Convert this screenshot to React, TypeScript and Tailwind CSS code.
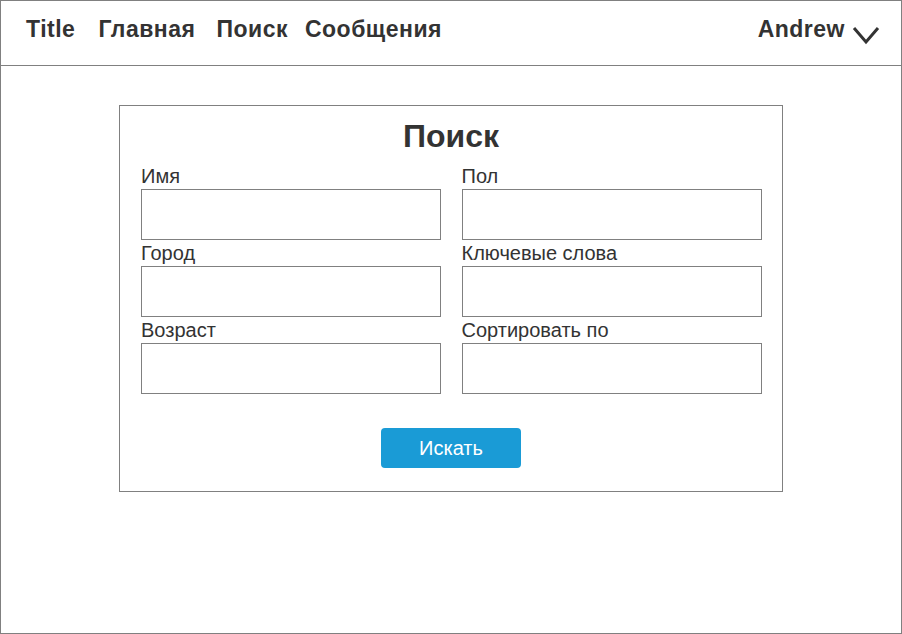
export default function App() {
  const fields = [
    ['Имя', 'Пол'],
    ['Город', 'Ключевые слова'],
    ['Возраст', 'Сортировать по'],
  ];

  return (
    <div className="h-[634px] w-[902px] border border-[#808080] bg-white text-[#333333] font-['Liberation_Sans',Arial,sans-serif]">
      {/* top bar */}
      <header className="flex h-[65px] items-center justify-between border-b border-[#808080] pb-[8px] pl-[25px] pr-[21px]">
        <nav className="flex items-center text-[23px] font-bold tracking-[0.5px]">
          <span className="mr-[23px]">Title</span>
          <span className="mr-[21px]">Главная</span>
          <span className="mr-[17px]">Поиск</span>
          <span>Сообщения</span>
        </nav>
        <div className="flex items-center gap-[7px] text-[23px] font-bold tracking-[0.5px]">
          <span>Andrew</span>
          <svg width="28" height="20" viewBox="0 0 28 20" className="mt-[11px]">
            <polyline points="2,3 14,17 26,3" fill="none" stroke="#333333" strokeWidth="3" />
          </svg>
        </div>
      </header>

      {/* search card */}
      <div className="mx-auto mt-[39px] w-[664px] border border-[#808080] px-[21px] pb-[23px]">
        <h1 className="h-[57px] pt-[12px] text-center text-[32px] font-bold leading-[36px]">Поиск</h1>
        <div className="grid grid-cols-2 gap-x-[21px]">
          {fields.flat().map((label) => (
            <div key={label} className="flex flex-col">
              <label className="h-[26px] text-[20px] leading-[26px]">{label}</label>
              <input className="h-[51px] w-[300px] border border-[#808080] bg-white outline-none" />
            </div>
          ))}
        </div>
        <div className="mt-[34px] flex justify-center">
          <button className="h-[40px] w-[140px] rounded-[4px] bg-[#1a9bd6] text-[20px] text-white">Искать</button>
        </div>
      </div>
    </div>
  );
}
